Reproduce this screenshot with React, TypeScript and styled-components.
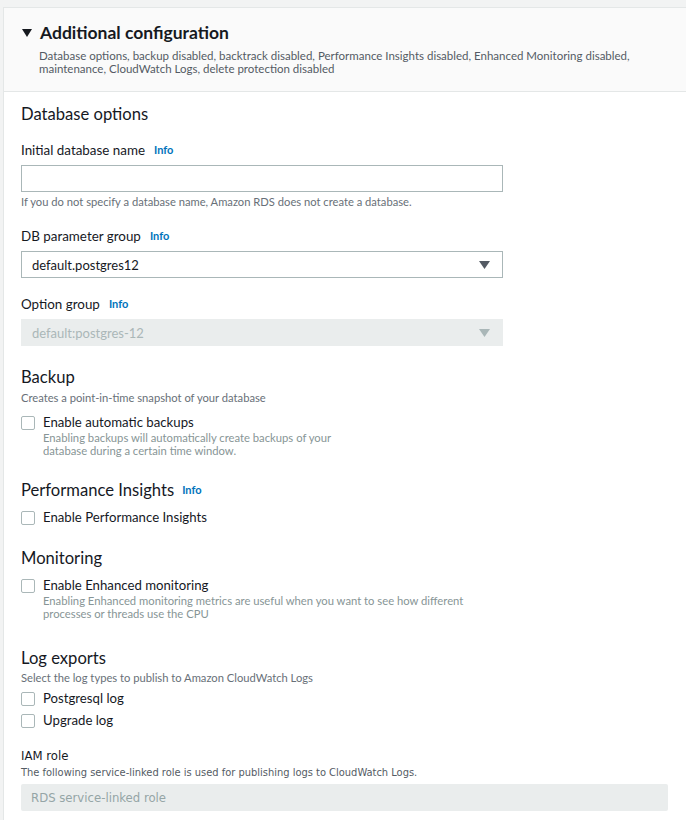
import React from "react";
import styled, { createGlobalStyle } from "styled-components";

const Global = createGlobalStyle`
  html, body { margin: 0; padding: 0; background: #f2f3f3; }
  body { font-family: Lato, "Noto Sans", sans-serif; color: #16191f; }
  * { box-sizing: border-box; }
`;

const Page = styled.div`
  padding: 7px 0 0 3px;
  background: #f2f3f3;
  min-height: 820px;
`;

const Panel = styled.div`
  background: #ffffff;
  border-left: 1px solid #e4e7e7;
  border-top: 1px solid #e4e7e7;
  min-height: 813px;
`;

const Header = styled.div`
  background: #fafafa;
  border-bottom: 1px solid #e4e7e7;
  padding: 14px 17px 16px 18px;
`;

const TitleRow = styled.div`
  display: flex;
  align-items: center;
  gap: 8px;
  font-size: 17.5px;
  line-height: 22px;
  font-weight: 700;
  color: #16191f;
`;

const Caret = styled.svg`
  width: 10px;
  height: 8px;
  flex: none;
`;

const HeaderDesc = styled.div`
  margin: 6px 0 0 17px;
  font-size: 11.5px;
  line-height: 12.5px;
  color: #545b64;
  max-width: 605px;
`;

const Body = styled.div`
  padding: 11px 17px 0 17px;
`;

const Heading = styled.div<{ $mt?: number }>`
  margin-top: ${(p) => p.$mt ?? 0}px;
  font-size: 16.6px;
  line-height: 22px;
  color: #16191f;
  display: flex;
  align-items: center;
  gap: 8px;
`;

const Label = styled.div<{ $mt?: number }>`
  margin-top: ${(p) => p.$mt ?? 0}px;
  font-size: 13.4px;
  line-height: 20px;
  color: #16191f;
  display: flex;
  align-items: center;
  gap: 9px;
`;

const Info = styled.span`
  font-size: 11px;
  font-weight: 700;
  color: #0073bb;
`;

const TextInput = styled.div`
  margin-top: 5px;
  width: 482px;
  height: 27px;
  border: 1px solid #aab7b8;
  background: #fff;
`;

const Hint = styled.div<{ $mt?: number }>`
  margin-top: ${(p) => p.$mt ?? 3}px;
  font-size: 11.2px;
  line-height: 14px;
  color: #687078;
`;

const Select = styled.div<{ $disabled?: boolean }>`
  margin-top: 5px;
  width: 482px;
  height: 27px;
  border: 1px solid ${(p) => (p.$disabled ? "#eaeded" : "#aab7b8")};
  background: ${(p) => (p.$disabled ? "#eaeded" : "#fff")};
  color: ${(p) => (p.$disabled ? "#aab7b8" : "#16191f")};
  display: flex;
  align-items: center;
  justify-content: space-between;
  padding: 0 12px 0 10px;
  font-size: 13px;
`;

const Arrow = styled.svg`
  width: 11px;
  height: 8px;
`;

const CheckRow = styled.div<{ $mt?: number }>`
  margin-top: ${(p) => p.$mt ?? 0}px;
  display: grid;
  grid-template-columns: 14px 1fr;
  column-gap: 8px;
`;

const Box = styled.span`
  width: 14px;
  height: 14px;
  margin-top: 3px;
  border: 1px solid #aab7b8;
  border-radius: 2px;
  background: #fff;
`;

const CheckText = styled.div`
  display: flex;
  flex-direction: column;
`;

const CheckLabel = styled.div`
  font-size: 13.2px;
  line-height: 18px;
  color: #16191f;
`;

const CheckDesc = styled.div<{ $w?: number }>`
  font-size: 11.25px;
  line-height: 13px;
  color: #879596;
  max-width: ${(p) => p.$w ?? 600}px;
`;

const IamBlock = styled.div`
  margin-top: 19px;
  font-family: "Liberation Sans Narrow", "DejaVu Sans Condensed", "Roboto", sans-serif;
`;

const IamTitle = styled.div`
  font-size: 13px;
  line-height: 16px;
  color: #16191f;
`;

const IamDesc = styled.div`
  margin-top: 2px;
  font-size: 11px;
  line-height: 14px;
  color: #545b64;
`;

const IamBox = styled.div`
  margin-top: 4px;
  width: 647px;
  height: 27px;
  background: #eaeded;
  border-radius: 2px;
  color: #95a5a6;
  font-size: 13px;
  display: flex;
  align-items: center;
  padding-left: 10px;
`;

const CaretIcon = () => (
  <Caret viewBox="0 0 10 8">
    <path d="M0 0 H10 L5 8 Z" fill="#16191f" />
  </Caret>
);

const DownArrow = ({ color }: { color: string }) => (
  <Arrow viewBox="0 0 11 8">
    <path d="M0 0 H11 L5.5 8 Z" fill={color} />
  </Arrow>
);

const Check = ({ label, desc, mt, w }: { label: string; desc?: string; mt?: number; w?: number }) => (
  <CheckRow $mt={mt}>
    <Box />
    <CheckText>
      <CheckLabel>{label}</CheckLabel>
      {desc && <CheckDesc $w={w}>{desc}</CheckDesc>}
    </CheckText>
  </CheckRow>
);

export default function App() {
  return (
    <>
      <Global />
      <Page>
        <Panel>
          <Header>
            <TitleRow>
              <CaretIcon />
              Additional configuration
            </TitleRow>
            <HeaderDesc>
              Database options, backup disabled, backtrack disabled, Performance Insights disabled, Enhanced Monitoring disabled, maintenance, CloudWatch Logs, delete protection disabled
            </HeaderDesc>
          </Header>
          <Body>
            <Heading>Database options</Heading>
            <Label $mt={15}>
              Initial database name <Info>Info</Info>
            </Label>
            <TextInput />
            <Hint>If you do not specify a database name, Amazon RDS does not create a database.</Hint>

            <Label $mt={17}>
              DB parameter group <Info>Info</Info>
            </Label>
            <Select>
              default.postgres12
              <DownArrow color="#545b64" />
            </Select>

            <Label $mt={16}>
              Option group <Info>Info</Info>
            </Label>
            <Select $disabled>
              default:postgres-12
              <DownArrow color="#aab7b8" />
            </Select>

            <Heading $mt={20}>Backup</Heading>
            <Hint>Creates a point-in-time snapshot of your database</Hint>
            <Check
              mt={8}
              label="Enable automatic backups"
              desc="Enabling backups will automatically create backups of your database during a certain time window."
              w={300}
            />

            <Heading $mt={22}>
              Performance Insights <Info>Info</Info>
            </Heading>
            <Check mt={7} label="Enable Performance Insights" />

            <Heading $mt={21}>Monitoring</Heading>
            <Check
              mt={7}
              label="Enable Enhanced monitoring"
              desc="Enabling Enhanced monitoring metrics are useful when you want to see how different processes or threads use the CPU"
              w={430}
            />

            <Heading $mt={27}>Log exports</Heading>
            <Hint $mt={2}>Select the log types to publish to Amazon CloudWatch Logs</Hint>
            <Check mt={4} label="Postgresql log" />
            <Check mt={4} label="Upgrade log" />

            <IamBlock>
              <IamTitle>IAM role</IamTitle>
              <IamDesc>The following service-linked role is used for publishing logs to CloudWatch Logs.</IamDesc>
              <IamBox>RDS service-linked role</IamBox>
            </IamBlock>
          </Body>
        </Panel>
      </Page>
    </>
  );
}
